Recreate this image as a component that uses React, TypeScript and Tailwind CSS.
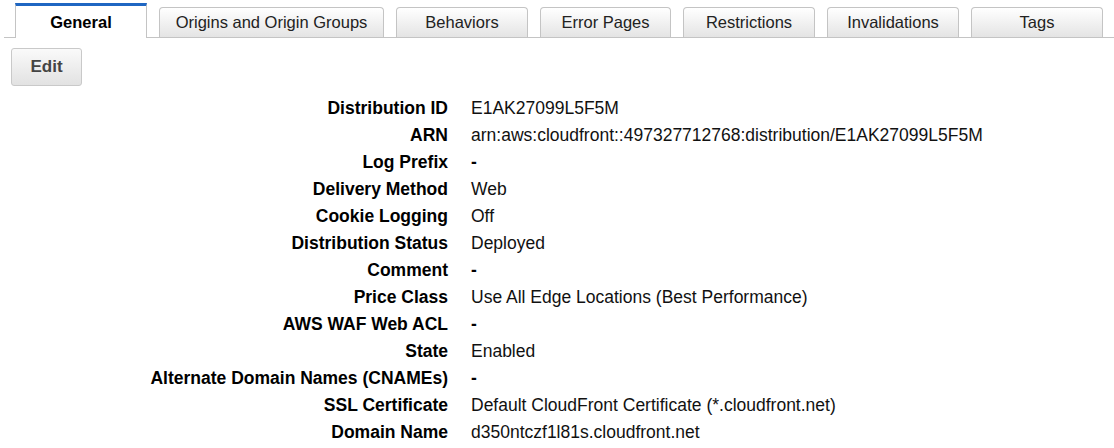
const TABS: { label: string; width: string }[] = [
  { label: 'General', width: 'w-[132px]' },
  { label: 'Origins and Origin Groups', width: 'w-[225px]' },
  { label: 'Behaviors', width: 'w-[132px]' },
  { label: 'Error Pages', width: 'w-[131px]' },
  { label: 'Restrictions', width: 'w-[132px]' },
  { label: 'Invalidations', width: 'w-[132px]' },
  { label: 'Tags', width: 'w-[132px]' },
]

const ROWS: [string, string][] = [
  ['Distribution ID', 'E1AK27099L5F5M'],
  ['ARN', 'arn:aws:cloudfront::497327712768:distribution/E1AK27099L5F5M'],
  ['Log Prefix', '-'],
  ['Delivery Method', 'Web'],
  ['Cookie Logging', 'Off'],
  ['Distribution Status', 'Deployed'],
  ['Comment', '-'],
  ['Price Class', 'Use All Edge Locations (Best Performance)'],
  ['AWS WAF Web ACL', '-'],
  ['State', 'Enabled'],
  ['Alternate Domain Names (CNAMEs)', '-'],
  ['SSL Certificate', 'Default CloudFront Certificate (*.cloudfront.net)'],
  ['Domain Name', 'd350ntczf1l81s.cloudfront.net'],
]

export default function App() {
  return (
    <div className="w-[1114px] h-[448px] overflow-hidden bg-white font-['Liberation_Sans',Arial,sans-serif] text-[16px]">
      {/* tab strip */}
      <div className="ml-1 pl-[11px] h-[38px] flex items-end gap-3 border-b border-[#c4c4c4] text-[16.5px]">
        {TABS.map((t, i) =>
          i === 0 ? (
            <div
              key={t.label}
              className={`${t.width} h-[35px] -mb-px flex items-center justify-center bg-white border-x border-[#c4c4c4] border-t-[3px] border-t-[#1f66c2] font-bold text-black`}
            >
              {t.label}
            </div>
          ) : (
            <div
              key={t.label}
              className={`${t.width} h-[30px] flex items-center justify-center rounded-t-[4px] border border-b-0 border-[#c4c4c4] bg-gradient-to-b from-white to-[#e4e4e4] text-[#222]`}
            >
              {t.label}
            </div>
          )
        )}
      </div>

      <button className="ml-[11px] mt-[10px] w-[71px] h-[38px] rounded-[3px] border border-[#c9c9c9] bg-gradient-to-b from-[#fafafa] to-[#e2e2e2] font-bold text-[17px] text-[#444]">
        Edit
      </button>

      <div className="mt-[9px] grid grid-cols-[448px_1fr] gap-x-[23px] text-[17.5px]">
        {ROWS.map(([k, v]) => (
          <div key={k} className="contents">
            <div className="text-right font-bold text-black leading-[27px] whitespace-nowrap">{k}</div>
            <div className={`leading-[27px] whitespace-nowrap ${v === '-' ? 'font-bold text-black' : 'text-[#111]'}`}>{v}</div>
          </div>
        ))}
      </div>
    </div>
  )
}
